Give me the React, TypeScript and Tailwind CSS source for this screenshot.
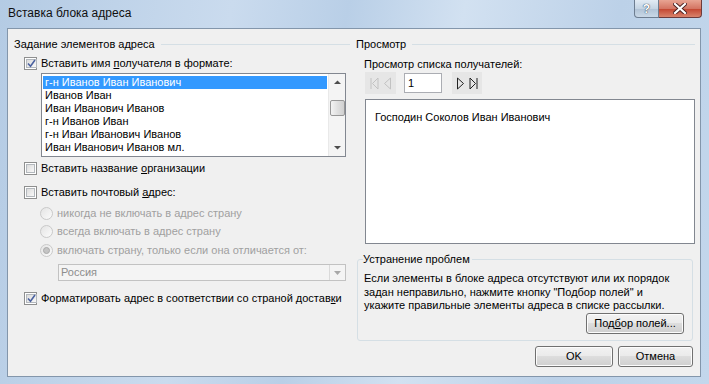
import React from "react";

function CheckBox({ checked }: { checked?: boolean }) {
  return (
    <span className="w-[13px] h-[13px] shrink-0 border border-[#8e8f8f] bg-white p-[1px] flex">
      <span className="flex-1 border border-[#b3b8bd] bg-[linear-gradient(135deg,#dcdcdc,#f8f8f8)] flex items-center justify-center">
        {checked && (
          <svg width="9" height="9" viewBox="0 0 9 9">
            <path d="M1 4.5 L3.5 7.2 L8 1" fill="none" stroke="#4b62a0" strokeWidth="1.6" />
          </svg>
        )}
      </span>
    </span>
  );
}

function Radio({ checked }: { checked?: boolean }) {
  return (
    <span className="w-[13px] h-[13px] shrink-0 rounded-full border border-[#c9c9c9] bg-[linear-gradient(135deg,#e4e4e4,#fbfbfb)] flex items-center justify-center">
      {checked && <span className="w-[7px] h-[7px] rounded-full border border-[#a9a9a9] bg-[#c4c4c4]" />}
    </span>
  );
}

function Btn({ children, className }: { children: React.ReactNode; className: string }) {
  return (
    <button className={`h-[21px] rounded-[3px] border border-[#707070] bg-[linear-gradient(#f2f2f2_0%,#ebebeb_45%,#dddddd_50%,#cfcfcf_100%)] shadow-[inset_0_0_0_1px_#fcfcfc] text-[11px] text-black flex items-center justify-center ${className}`}>
      {children}
    </button>
  );
}

const names = [
  "г-н Иванов Иван Иванович",
  "Иванов Иван",
  "Иван Иванович Иванов",
  "г-н Иванов Иван",
  "г-н Иван Иванович Иванов",
  "Иван Иванович Иванов мл.",
];

export default function App() {
  return (
    <div className="w-[709px] h-[384px] overflow-hidden bg-[linear-gradient(100deg,#b4cbe4_0%,#cadbee_30%,#b9cfe7_45%,#d2e1f1_60%,#bcd1e8_80%,#c3d7ec_100%)] font-['Liberation_Sans',Arial,sans-serif] text-[11px] text-black flex flex-col">
      {/* title bar */}
      <div className="h-[28px] shrink-0 flex items-start">
        <div className="pl-[8px] pt-[6px] text-[12px] leading-[14px] text-[#101010]">Вставка блока адреса</div>
        <div className="ml-auto mr-[7px] flex">
          <div className="w-[25px] h-[18px] rounded-bl-[4px] border border-[#6d7d90] border-t-0 bg-[linear-gradient(#e2ebf4,#c5d4e3_50%,#b0c2d5_51%,#c9d8e7)] flex items-center justify-center text-[12px] font-bold text-white [text-shadow:0_0_1px_#2f3f52,0_0_1px_#2f3f52]">
            ?
          </div>
          <div className="w-[43px] h-[18px] rounded-br-[4px] border border-[#6d3b3b] border-t-0 border-l-0 bg-[linear-gradient(#e8a493,#d47563_50%,#c2442f_51%,#d9836c)] flex items-center justify-center">
            <svg width="14" height="11" viewBox="0 0 14 11">
              <path d="M2 1 L12 10 M12 1 L2 10" stroke="#4a2020" strokeWidth="4" strokeLinecap="square" />
              <path d="M2 1 L12 10 M12 1 L2 10" stroke="#ffffff" strokeWidth="2.2" strokeLinecap="square" />
            </svg>
          </div>
        </div>
      </div>

      {/* client */}
      <div className="ml-[7px] mr-[8px] h-[349px] border border-[#8396ab] bg-[#f0f0f0] flex">
        {/* left column */}
        <div className="w-[342px] shrink-0 flex flex-col">
          <div className="mt-[8px] h-[14px] pl-[6px] flex items-center gap-[6px]">
            <span>Задание элементов адреса</span>
            <span className="flex-1 h-px bg-[#d5dfe5]" />
          </div>
          <div className="mt-[5px] h-[14px] pl-[16px] flex items-center gap-[4px]">
            <CheckBox checked />
            <span>Вставить имя <u>п</u>олучателя в формате:</span>
          </div>
          <div className="mt-[3px] ml-[33px] w-[305px] h-[84px] border border-[#828790] bg-white flex">
            <div className="flex-1 pt-[2px] pl-[1px] pr-[1px]">
              {names.map((n, i) => (
                <div
                  key={n}
                  className={`h-[13px] leading-[13px] pl-[2px] ${i === 0 ? "bg-[#3399ff] text-white" : ""}`}
                >
                  {n}
                </div>
              ))}
            </div>
            <div className="w-[17px] bg-[#f4f4f4] border-l border-[#e9e9e9] flex flex-col items-center">
              <svg width="17" height="16" viewBox="0 0 17 16">
                <path d="M5 10 L8.5 6.5 L12 10 Z" fill="#4d4d4d" />
              </svg>
              <div className="mt-[10px] w-[15px] h-[16px] rounded-[2px] border border-[#979797] bg-[linear-gradient(90deg,#f3f3f3,#e0e0e0_50%,#d0d0d0)]" />
              <svg className="mt-auto" width="17" height="16" viewBox="0 0 17 16">
                <path d="M5 6 L8.5 9.5 L12 6 Z" fill="#4d4d4d" />
              </svg>
            </div>
          </div>
          <div className="mt-[4px] h-[14px] pl-[16px] flex items-center gap-[4px]">
            <CheckBox />
            <span>Вставить название <u>о</u>рганизации</span>
          </div>
          <div className="mt-[10px] h-[14px] pl-[16px] flex items-center gap-[4px]">
            <CheckBox />
            <span>Вставить почтовый <u>а</u>дрес:</span>
          </div>
          <div className="mt-[7px] h-[14px] pl-[32px] flex items-center gap-[4px] text-[#a0a0a0]">
            <Radio />
            <span>никогда не включать в адрес страну</span>
          </div>
          <div className="mt-[4px] h-[14px] pl-[32px] flex items-center gap-[4px] text-[#a0a0a0]">
            <Radio />
            <span>всегда включать в адрес страну</span>
          </div>
          <div className="mt-[5px] h-[14px] pl-[32px] flex items-center gap-[4px] text-[#a0a0a0]">
            <Radio checked />
            <span>включать страну, только если она отличается от:</span>
          </div>
          <div className="mt-[7px] ml-[50px] w-[288px] h-[17px] border border-[#c2c2c2] bg-[#f4f4f4] flex items-center">
            <span className="pl-[2px] flex-1 text-[#8d8d8d]">Россия</span>
            <span className="w-[16px] h-full border-l border-[#dadada] flex items-center justify-center">
              <svg width="7" height="4" viewBox="0 0 7 4">
                <path d="M0 0 L7 0 L3.5 4 Z" fill="#a8a8a8" />
              </svg>
            </span>
          </div>
          <div className="mt-[10px] h-[14px] pl-[16px] flex items-center gap-[4px]">
            <CheckBox checked />
            <span>Форматировать адрес в соответствии со страной достав<u>к</u>и</span>
          </div>
        </div>

        {/* right column */}
        <div className="flex-1 flex flex-col">
          <div className="mt-[8px] h-[14px] pl-[6px] pr-[5px] flex items-center gap-[6px]">
            <span>Просмотр</span>
            <span className="flex-1 h-px bg-[#d5dfe5]" />
          </div>
          <div className="mt-[6px] h-[14px] pl-[14px] flex items-center">Просмотр списка получателей:</div>
          <div className="mt-[1px] h-[22px] pl-[15px] flex items-center">
            <div className="w-[31px] h-[22px] bg-[#e6e6e6] flex items-center justify-center gap-[4px]">
              <svg width="9" height="13" viewBox="0 0 9 13">
                <path d="M1 1 L1 12 M8 1 L2.5 6.5 L8 12 Z" fill="none" stroke="#c2c2c2" strokeWidth="1" />
              </svg>
              <svg width="9" height="13" viewBox="0 0 9 13">
                <path d="M7.5 1 L1.5 6.5 L7.5 12 Z" fill="none" stroke="#c2c2c2" strokeWidth="1" />
              </svg>
            </div>
            <div className="ml-[8px] w-[38px] h-[20px] border border-[#abadb3] bg-white pl-[3px] flex items-center text-[11px]">1</div>
            <div className="ml-[10px] w-[30px] h-[22px] bg-[#e6e6e6] flex items-center justify-center gap-[4px]">
              <svg width="9" height="13" viewBox="0 0 9 13">
                <path d="M1.5 1 L7.5 6.5 L1.5 12 Z" fill="none" stroke="#222222" strokeWidth="1" />
              </svg>
              <svg width="9" height="13" viewBox="0 0 9 13">
                <path d="M8 1 L8 12 M1 1 L6.5 6.5 L1 12 Z" fill="none" stroke="#222222" strokeWidth="1" />
              </svg>
            </div>
          </div>
          <div className="mt-[5px] ml-[15px] w-[330px] h-[145px] border border-[#828790] bg-white pl-[9px] pt-[9px]">
            Господин Соколов Иван Иванович
          </div>
          <fieldset className="mt-[8px] ml-[7px] w-[336px] h-[89px] rounded-[3px] border border-[#d5dfe5] pl-[6px] pr-[8px]">
            <legend className="ml-[-1px] pr-[2px] leading-[14px]">Устранение проблем</legend>
            <p className="mt-[6px] leading-[13.5px]">
              Если элементы в блоке адреса отсутствуют или их порядок задан неправильно, нажмите кнопку "Подбор полей" и укажите правильные элементы адреса в списке рассылки.
            </p>
            <div className="mt-[0px] flex justify-end">
              <Btn className="w-[98px]">
                <span>Под<u>б</u>ор полей...</span>
              </Btn>
            </div>
          </fieldset>
          <div className="mt-[5px] pr-[7px] flex justify-end gap-[5px]">
            <Btn className="w-[78px]">OK</Btn>
            <Btn className="w-[75px]">Отмена</Btn>
          </div>
        </div>
      </div>
    </div>
  );
}
